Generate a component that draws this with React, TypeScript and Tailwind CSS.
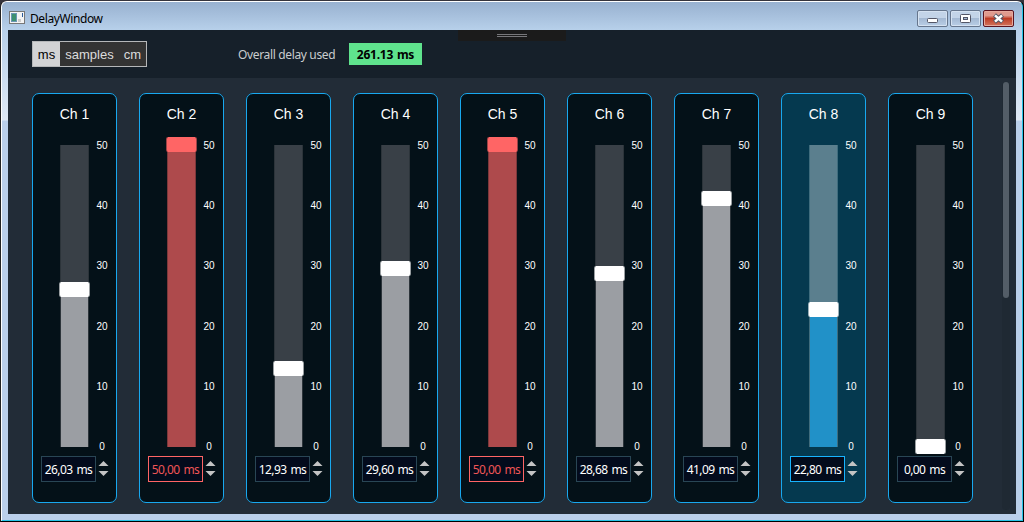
import clsx from "clsx";

interface Channel {
  name: string;
  value: number;
  label: string;
  state?: "max" | "active";
}

const channels: Channel[] = [
  { name: "Ch 1", value: 26.03, label: "26,03 ms" },
  { name: "Ch 2", value: 50, label: "50,00 ms", state: "max" },
  { name: "Ch 3", value: 12.93, label: "12,93 ms" },
  { name: "Ch 4", value: 29.6, label: "29,60 ms" },
  { name: "Ch 5", value: 50, label: "50,00 ms", state: "max" },
  { name: "Ch 6", value: 28.68, label: "28,68 ms" },
  { name: "Ch 7", value: 41.09, label: "41,09 ms" },
  { name: "Ch 8", value: 22.8, label: "22,80 ms", state: "active" },
  { name: "Ch 9", value: 0, label: "0,00 ms" },
];

const MAX = 50;
const TRACK = 302;
const ticks = [50, 40, 30, 20, 10, 0];

function TitleBar() {
  return (
    <div className="flex h-7 shrink-0 items-start justify-between bg-linear-to-b from-[#98b1d0] to-[#b7d0ea] pl-[7px] pr-2">
      <div className="flex items-start gap-[5px] pt-[7px]">
        <svg width="16" height="13" viewBox="0 0 16 13" className="mt-[2px]">
          <rect x="0.5" y="0.5" width="15" height="12" fill="#f4f4f4" stroke="#777" />
          <rect x="2" y="2" width="6" height="9" fill="#6a96b4" />
          <rect x="3" y="3" width="4" height="7" fill="#3d9070" />
          <rect x="9" y="8" width="3" height="3" fill="#ccc" />
          <rect x="13" y="2" width="1" height="4" fill="#2a5c9c" />
        </svg>
        <span className="font-['Noto_Sans'] text-[12px] leading-[20px] tracking-[-0.4px] text-black">
          DelayWindow
        </span>
      </div>
      <div className="flex gap-[2px] pt-2">
        <button className="flex h-[17px] w-[31px] items-center justify-center rounded-[2px] border border-[#66768d] bg-linear-to-b from-[#c3d4e8] from-45% via-[#a4b9d3] via-50% to-[#b9cee6] shadow-[inset_0_0_0_1px_#d5e2f1]">
          <svg width="11" height="5" viewBox="0 0 11 5" className="mt-1">
            <rect x="0.5" y="0.5" width="10" height="4" rx="1" fill="#fff" stroke="#535666" />
          </svg>
        </button>
        <button className="flex h-[17px] w-[31px] items-center justify-center rounded-[2px] border border-[#66768d] bg-linear-to-b from-[#c3d4e8] from-45% via-[#a4b9d3] via-50% to-[#b9cee6] shadow-[inset_0_0_0_1px_#d5e2f1]">
          <svg width="11" height="9" viewBox="0 0 11 9">
            <rect x="0.5" y="0.5" width="10" height="8" rx="1" fill="#fff" stroke="#535666" />
            <rect x="3.5" y="3.5" width="4" height="2" fill="#a4b9d3" stroke="#535666" />
          </svg>
        </button>
        <button className="flex h-[17px] w-[31px] items-center justify-center rounded-[2px] border border-[#5a1420] bg-linear-to-b from-[#e09a8e] from-30% via-[#bd3b25] via-50% to-[#d2735c] shadow-[inset_0_0_0_1px_#e6a99d]">
          <svg width="13" height="11" viewBox="0 0 13 11">
            <path d="M2.5 2 L10.5 9 M10.5 2 L2.5 9" stroke="#535666" strokeWidth="4.4" />
            <path d="M3 2.4 L10 8.6 M10 2.4 L3 8.6" stroke="#fff" strokeWidth="2.6" />
          </svg>
        </button>
      </div>
    </div>
  );
}

function Toolbar() {
  return (
    <div className="relative flex h-12 shrink-0 items-start bg-[#16202a] pl-6">
      <div className="mt-[11px] flex h-[26px] w-[115px] border border-[#b5b7b9] bg-[#333] font-['Liberation_Sans'] text-[13px] leading-[25px] text-[#dcdcdc]">
        <span className="w-[27px] bg-[#d2d3d5] text-center text-black">ms</span>
        <span className="w-[59px] text-center">samples</span>
        <span className="w-[27px] text-center">cm</span>
      </div>
      <span className="ml-[91px] mt-4 w-[111px] whitespace-nowrap font-['Noto_Sans'] text-[12px] leading-[18px] tracking-[-0.35px] text-[#c9ccce]">
        Overall delay used
      </span>
      <span className="mt-[13px] h-[22px] w-[73px] whitespace-nowrap bg-[#5fe38d] text-center font-['Noto_Sans'] text-[12px] font-bold leading-[23px] tracking-[-0.25px] text-black [word-spacing:1px]">
        261.13 ms
      </span>
      <div className="absolute left-[450px] top-0 flex h-[11px] w-[108px] flex-col items-center gap-px bg-[#1b1b1b] pt-1">
        <div className="h-px w-[30px] bg-[#77777a]" />
        <div className="h-px w-[30px] bg-[#77777a]" />
      </div>
    </div>
  );
}

function Slider({ channel }: { channel: Channel }) {
  const { value, state } = channel;
  const offset = (value / MAX) * TRACK;

  return (
    <div className="flex pl-[27px]">
      <div
        className={clsx(
          "relative flex h-[302px] w-[29px] flex-col justify-end border-x",
          state === "active" && "border-[#3f6c7d] bg-[#5b7f8e]",
          state === "max" && "border-[#7c383b] bg-[#394047]",
          !state && "border-[#2c343a] bg-[#394047]"
        )}
      >
        <div
          className={clsx(
            state === "max" && "bg-[#ae4a4c]",
            state === "active" && "bg-[#2191c8]",
            !state && "bg-[#9b9ea3]"
          )}
          style={{ height: offset }}
        />
        <div
          className={clsx(
            "absolute -left-[2px] h-[15px] w-[31px] rounded-[2px] border-x bg-clip-padding",
            state === "max"
              ? "border-[#ff6565]/60 bg-[#ff6565]"
              : "border-white/60 bg-white"
          )}
          style={{ bottom: Math.round(offset - 7.5) }}
        />
      </div>
      <div className="-mb-[6px] -mt-[5px] ml-[6px] flex w-[14px] flex-col items-center justify-between font-['Liberation_Sans'] text-[10px] leading-[12px] text-white">
        {ticks.map((tick) => (
          <span key={tick}>{tick}</span>
        ))}
      </div>
    </div>
  );
}

function ChannelStrip({ channel }: { channel: Channel }) {
  const { name, label, state } = channel;

  return (
    <div
      className={clsx(
        "flex h-[410px] w-[85px] shrink-0 flex-col rounded-[7px] border border-[#18a8ef]",
        state === "active" ? "bg-[#05394f]" : "bg-[#041118]"
      )}
    >
      <h2 className="mb-[21px] mt-[10px] text-center font-['Liberation_Sans'] text-[14px] leading-5 text-white">
        {name}
      </h2>
      <Slider channel={channel} />
      {/* the tick column overhangs the track by 6px on the bottom */}
      <div className="mt-[9px] flex items-center gap-[2px] pl-2">
        <div
          className={clsx(
            "h-[26px] w-[55px] whitespace-nowrap border bg-[#030b1c] text-center font-['Noto_Sans'] text-[12px] leading-[25px] tracking-[-0.6px] [word-spacing:1.5px]",
            state === "max" && "border-[#ff6565] text-[#ef5557]",
            state === "active" && "border-[#18b4ff] text-white",
            !state && "border-[#294655] text-white"
          )}
        >
          {label}
        </div>
        <svg width="11" height="16" viewBox="0 0 11 16" fill="#c4c4c4">
          <path d="M5.5 0 L10.5 5 H0.5 Z" />
          <path d="M0.5 10 H10.5 L5.5 15 Z" />
        </svg>
      </div>
    </div>
  );
}

export default function App() {
  return (
    <div className="h-[522px] w-[1024px] overflow-hidden bg-[#35333c]">
      <div className="flex h-full flex-col rounded-t-[7px] border border-b-black border-l-[#222] border-r-black border-t-[#35333c]">
        <div className="flex min-h-0 grow flex-col overflow-hidden rounded-t-[6px] border border-b-[#27c5e8] border-l-white border-r-[#27c5e8] border-t-white bg-linear-to-b from-[#b7d0ea] from-[28px] via-[#dfe9f5] via-[118px] to-[#bacfea] to-[119px]">
          <TitleBar />
          <div className="mx-[6px] mb-[6px] flex min-h-0 grow flex-col bg-[#222c37]">
            <Toolbar />
            <div className="flex min-h-0 grow justify-between pl-6">
              <div className="flex gap-[22px] pt-[15px]">
                {channels.map((channel) => (
                  <ChannelStrip key={channel.name} channel={channel} />
                ))}
              </div>
              <div className="mb-1 mr-[6px] mt-1 w-2 rounded bg-[#1f2933]">
                <div className="ml-px h-[216px] w-[6px] rounded-full bg-[#535d67]" />
              </div>
            </div>
          </div>
        </div>
      </div>
    </div>
  );
}
